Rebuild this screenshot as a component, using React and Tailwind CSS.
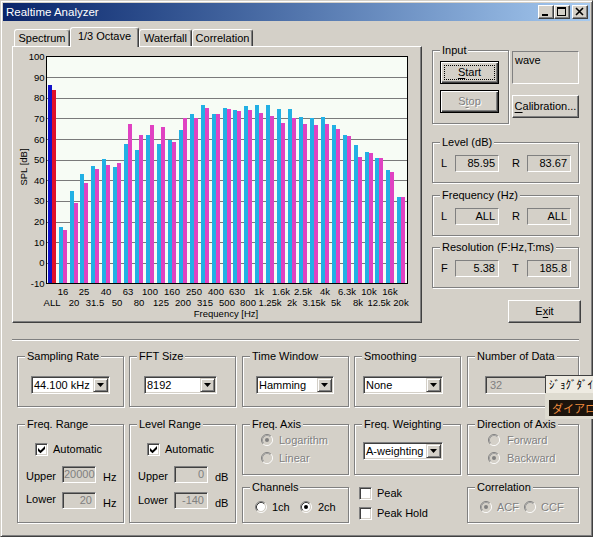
import React from 'react';

const FONT = "font-['Liberation_Sans',Arial,sans-serif]";
const raised = "border border-t-white border-l-white border-r-[#404040] border-b-[#404040] shadow-[inset_-1px_-1px_0_#808080]";
const defBtn = "border border-black shadow-[inset_1px_1px_0_#fff,inset_-1px_-1px_0_#404040,inset_-2px_-2px_0_#808080]";
const sunken2 = "border border-t-[#808080] border-l-[#808080] border-r-white border-b-white shadow-[inset_1px_1px_0_#404040,inset_-1px_-1px_0_#d4d0c8] p-[1px]";
const sunken1 = "border border-t-[#808080] border-l-[#808080] border-r-white border-b-white";
const dis = "text-[#808080] [text-shadow:1px_1px_0_#fff]";

const cyan = [85.95, 17.6, 34.6, 43, 46.8, 50.2, 46.5, 57.5, 54.6, 61.8, 57.6, 59.6, 64.2, 72, 76.5, 72, 75, 74, 75.8, 76.7, 76.7, 74.8, 74.8, 70.9, 70.4, 70.9, 66.6, 62.2, 56.9, 53.9, 51, 44.8, 31.7];
const pink = [83.67, 15.7, 28.8, 38.6, 45.3, 47.4, 48.3, 67.2, 61.9, 66.8, 65.8, 58.5, 70, 70, 75, 72, 74.4, 73.4, 73.9, 72.4, 71.4, 68, 70, 67.5, 66.6, 67.5, 65, 61.7, 51.5, 53, 51, 44.2, 31.7];
const labels = ['ALL', '16', '20', '25', '31.5', '40', '50', '63', '80', '100', '125', '160', '200', '250', '315', '400', '500', '630', '800', '1k', '1.25k', '1.6k', '2k', '2.5k', '3.15k', '4k', '5k', '6.3k', '8k', '10k', '12.5k', '16k', '20k'];

const PX = 227 / 110;
const yv = (v) => 56.5 + (100 - v) * PX;
const xb = (i) => Math.round(47.7 + i * 10.925);

function Chart() {
  const grid = [];
  for (let k = 0; k <= 11; k++) grid.push(k);
  return (
    <svg width="408" height="275" viewBox="13 47 408 275" fontFamily="Liberation Sans, Arial, sans-serif" fontSize="9.5" shapeRendering="crispEdges">
      <rect x="46.5" y="56.5" width="361" height="227" fill="#f7fcf5" />
      {grid.slice(1, 11).map((k) => {
        const y = Math.round(56.5 + k * 20.636) + 0.5;
        return <line key={k} x1="47" x2="407" y1={y} y2={y} stroke="#7a7a7a" strokeWidth="1" />;
      })}
      {cyan.map((v, i) => {
        const x = xb(i);
        const y1 = yv(v);
        const y2 = yv(pink[i]);
        return (
          <g key={i}>
            <rect x={x} y={y1} width="4" height={283 - y1} fill={i === 0 ? '#1414c8' : '#22b0e4'} />
            <rect x={x + 4} y={y2} width="4" height={283 - y2} fill={i === 0 ? '#e0102a' : '#e042c2'} />
          </g>
        );
      })}
      <rect x="46.5" y="56.5" width="361" height="227" fill="none" stroke="#000" strokeWidth="1" />
      {grid.map((k) => {
        const v = 100 - k * 10;
        const y = 56.5 + k * 20.636;
        return (
          <text key={k} x="44.5" y={y + 3.5} textAnchor="end" fill="#000">{v}</text>
        );
      })}
      <text transform="translate(26.5,167) rotate(-90)" textAnchor="middle" fill="#000">SPL [dB]</text>
      {labels.map((t, i) => (
        <text key={t} x={xb(i) + 4} y={i % 2 ? 294.5 : 306} textAnchor="middle" fill="#000">{t}</text>
      ))}
      <text x="226" y="316.5" textAnchor="middle" fill="#000">Frequency [Hz]</text>
    </svg>
  );
}

function Group({ title, className = '', inner = '', children }) {
  return (
    <fieldset className={`border border-[#808080] shadow-[inset_1px_1px_0_#fff,1px_1px_0_#fff] min-w-0 ${className}`}>
      <legend className="ml-[7px] px-[2px] h-[14px] leading-[14px] bg-[#d4d0c8]">{title}</legend>
      <div className={inner}>{children}</div>
    </fieldset>
  );
}

function Btn({ children, className = '', def = false, disabled = false, focus = false }) {
  return (
    <div className={`${def ? defBtn : raised} bg-[#d4d0c8] flex items-center justify-center ${focus ? 'outline-1 outline-dotted outline-black outline-offset-[-5px]' : ''} ${disabled ? dis : ''} ${className}`}>
      <span>{children}</span>
    </div>
  );
}

function Combo({ value, className = '' }) {
  return (
    <div className={`${sunken2} bg-white h-[18px] flex ${className}`}>
      <div className="flex-1 pl-[1px] leading-[14px] whitespace-nowrap overflow-hidden">{value}</div>
      <div className="w-[15px] h-[14px] border border-t-[#d4d0c8] border-l-[#d4d0c8] border-r-[#404040] border-b-[#404040] shadow-[inset_1px_1px_0_#fff,inset_-1px_-1px_0_#808080] bg-[#d4d0c8] flex items-center justify-center">
        <svg width="7" height="4" viewBox="0 0 7 4"><path d="M0 0h7L3.5 4z" fill="#000" /></svg>
      </div>
    </div>
  );
}

function Edit({ value, className = '', left = false }) {
  return (
    <div className={`${sunken2} bg-[#d4d0c8] text-[#808080] leading-[13px] ${left ? 'pl-[4px]' : 'text-right pr-[3px]'} ${className}`}>{value}</div>
  );
}

function Val({ children }) {
  return <div className={`${sunken1} w-[44px] h-[17px] text-right pr-[3px] leading-[15px]`}>{children}</div>;
}

function Check({ checked }) {
  return (
    <div className={`${sunken2} bg-white w-[13px] h-[13px] shrink-0`}>
      {checked && (
        <svg width="9" height="9" viewBox="0 0 9 9" className="block">
          <path d="M1 3L3.5 5.5L8 1V4L3.5 8.3L1 6Z" fill="#000" />
        </svg>
      )}
    </div>
  );
}

function Radio({ checked = false, disabled = false }) {
  return (
    <svg width="12" height="12" viewBox="0 0 12 12" className="shrink-0">
      <circle cx="6" cy="6" r="4.2" fill={disabled ? '#d4d0c8' : '#fff'} />
      <path d="M2.11 9.89A5.5 5.5 0 0 1 9.89 2.11" stroke="#808080" fill="none" />
      <path d="M9.89 2.11A5.5 5.5 0 0 1 2.11 9.89" stroke="#fff" fill="none" />
      <path d="M2.82 9.18A4.5 4.5 0 0 1 9.18 2.82" stroke={disabled ? '#a0a0a0' : '#404040'} fill="none" />
      <path d="M9.18 2.82A4.5 4.5 0 0 1 2.82 9.18" stroke="#d4d0c8" fill="none" />
      {checked && <circle cx="6" cy="6" r="2" fill={disabled ? '#808080' : '#000'} />}
    </svg>
  );
}

function CapBtn({ children, className = '' }) {
  return (
    <div className={`w-[16px] h-[14px] ${raised} bg-[#d4d0c8] flex items-center justify-center ${className}`}>
      {children}
    </div>
  );
}

function Tab({ children, sel = false, className = '' }) {
  return (
    <div
      className={`${className} border-t border-l border-white border-r border-r-[#404040] shadow-[inset_-1px_0_0_#808080] rounded-t-[3px] bg-[#d4d0c8] flex items-center justify-center whitespace-nowrap ${
        sel ? 'h-[20px] -mb-[1px] relative z-10 pb-[3px]' : 'h-[17px]'
      }`}
    >
      {children}
    </div>
  );
}

export default function App() {
  return (
    <div className={`relative w-[593px] h-[537px] overflow-hidden bg-[#d4d0c8] text-black text-[11px] leading-[15px] ${FONT}`}>
      <div className="w-full h-full flex flex-col p-[2px] border border-t-[#d4d0c8] border-l-[#d4d0c8] border-r-[#404040] border-b-[#404040] shadow-[inset_1px_1px_0_#fff,inset_-1px_-1px_0_#808080]">
        {/* Title bar */}
        <div className="h-[18px] shrink-0 bg-linear-to-r from-[#0a246a] to-[#a6caf0] flex items-center pl-[3px] pr-[2px]">
          <span className="flex-1 text-white text-[11.5px] leading-[18px]">Realtime Analyzer</span>
          <CapBtn>
            <svg width="14" height="12" viewBox="0 0 14 12"><rect x="3" y="8" width="6" height="2" fill="#000" /></svg>
          </CapBtn>
          <CapBtn>
            <svg width="14" height="12" viewBox="0 0 14 12"><rect x="2.5" y="1.5" width="8" height="8" fill="none" stroke="#000" /><rect x="2" y="1" width="9" height="2" fill="#000" /></svg>
          </CapBtn>
          <CapBtn className="ml-[2px]">
            <svg width="14" height="12" viewBox="0 0 14 12"><path d="M3 2L10 9M10 2L3 9" stroke="#000" strokeWidth="1.6" /></svg>
          </CapBtn>
        </div>

        {/* Client */}
        <div className="flex-1 flex flex-col">
          <div className="flex pl-[9px]">
            {/* Tab control */}
            <div className="mt-[6px] w-[410px] flex flex-col">
              <div className="flex items-end h-[19px] pl-[2px]">
                <Tab className="w-[56px]">Spectrum</Tab>
                <Tab sel className="w-[69px]">1/3 Octave</Tab>
                <Tab className="w-[53px]">Waterfall</Tab>
                <Tab className="w-[61px]">Correlation</Tab>
              </div>
              <div className="w-[410px] h-[277px] border border-t-white border-l-white border-r-[#404040] border-b-[#404040] shadow-[inset_-1px_-1px_0_#808080]">
                <Chart />
              </div>
            </div>

            {/* Right panel */}
            <div className="ml-[9px] w-[152px] flex flex-col">
              <div className="flex items-start">
                <Group title="Input" className="ml-[1px] mt-[22px] w-[77px] h-[81px]" inner="pl-[7px] pt-[4px] flex flex-col gap-[6px]">
                  <Btn def focus className="w-[59px] h-[23px]"><span className="underline underline-offset-[2px]">S</span>tart</Btn>
                  <Btn def disabled className="w-[59px] h-[23px]">S<span className="underline underline-offset-[2px]">t</span>op</Btn>
                </Group>
                <div className="ml-[3px] mt-[30px] flex flex-col">
                  <div className={`${sunken2} bg-[#d4d0c8] shadow-none w-[67px] h-[33px] pl-[2px] leading-[15px]`}>wave</div>
                  <Btn className="mt-[11px] w-[67px] h-[23px]"><span className="underline underline-offset-[2px]">C</span>alibration...</Btn>
                </div>
              </div>
              <Group title="Level (dB)" className="ml-[1px] mt-[11px] w-[147px] h-[48px]" inner="pl-[8px] pt-[6px] flex items-center">
                <span className="w-[14px]">L</span>
                <Val>85.95</Val>
                <span className="ml-[13px] w-[15px]">R</span>
                <Val>83.67</Val>
              </Group>
              <Group title="Frequency (Hz)" className="ml-[1px] mt-[5px] w-[147px] h-[48px]" inner="pl-[8px] pt-[6px] flex items-center">
                <span className="w-[14px]">L</span>
                <Val>ALL</Val>
                <span className="ml-[13px] w-[15px]">R</span>
                <Val>ALL</Val>
              </Group>
              <Group title="Resolution (F:Hz,T:ms)" className="ml-[1px] mt-[4px] w-[147px] h-[48px]" inner="pl-[8px] pt-[6px] flex items-center">
                <span className="w-[14px]">F</span>
                <Val>5.38</Val>
                <span className="ml-[13px] w-[15px]">T</span>
                <Val>185.8</Val>
              </Group>
              <Btn className="ml-[77px] mt-[12px] w-[73px] h-[23px]">E<span className="underline underline-offset-[2px]">x</span>it</Btn>
            </div>
          </div>

          {/* Groove */}
          <div className="ml-[9px] mt-[16px] w-[567px] h-[2px] border-t border-t-[#808080] border-b border-b-white" />

          {/* Lower settings */}
          <div className="ml-[14px] mt-[8px] flex items-start">
            {/* col 1 */}
            <div className="w-[107px] flex flex-col">
              <Group title="Sampling Rate" className="w-[107px] h-[58px]" inner="pl-[13px] pt-[13px]">
                <Combo value="44.100 kHz" className="w-[79px]" />
              </Group>
              <Group title="Freq. Range" className="mt-[10px] w-[107px] h-[106px]" inner="pt-[12px]">
                <div className="pl-[17px] flex items-center h-[13px]">
                  <Check checked />
                  <span className="ml-[5px]">Automatic</span>
                </div>
                <div className="mt-[10px] pl-[8px] flex items-center h-[17px]">
                  <span className="w-[36px] mt-[3px]">Upper</span>
                  <Edit value="20000" className="w-[34px] h-[17px]" />
                  <span className="ml-[7px] mt-[6px]">Hz</span>
                </div>
                <div className="mt-[9px] pl-[8px] flex items-center h-[17px]">
                  <span className="w-[36px] -mt-[2px]">Lower</span>
                  <Edit value="20" className="w-[34px] h-[17px]" />
                  <span className="ml-[7px] mt-[6px]">Hz</span>
                </div>
              </Group>
            </div>

            {/* col 2 */}
            <div className="ml-[5px] w-[107px] flex flex-col">
              <Group title="FFT Size" className="w-[107px] h-[58px]" inner="pl-[14px] pt-[13px]">
                <Combo value="8192" className="w-[73px]" />
              </Group>
              <Group title="Level Range" className="mt-[10px] w-[107px] h-[106px]" inner="pt-[12px]">
                <div className="pl-[17px] flex items-center h-[13px]">
                  <Check checked />
                  <span className="ml-[5px]">Automatic</span>
                </div>
                <div className="mt-[10px] pl-[8px] flex items-center h-[17px]">
                  <span className="w-[36px] mt-[3px]">Upper</span>
                  <Edit value="0" className="w-[34px] h-[17px]" />
                  <span className="ml-[7px] mt-[6px]">dB</span>
                </div>
                <div className="mt-[9px] pl-[8px] flex items-center h-[17px]">
                  <span className="w-[36px]">Lower</span>
                  <Edit value="-140" className="w-[34px] h-[17px]" />
                  <span className="ml-[7px] mt-[6px]">dB</span>
                </div>
              </Group>
            </div>

            {/* col 3 */}
            <div className="ml-[6px] w-[107px] flex flex-col">
              <Group title="Time Window" className="w-[107px] h-[58px]" inner="pl-[13px] pt-[13px]">
                <Combo value="Hamming" className="w-[78px]" />
              </Group>
              <Group title="Freq. Axis" className="mt-[10px] w-[107px] h-[58px]" inner="pl-[18px] pt-[2px] flex flex-col gap-[4px]">
                <div className="flex items-center h-[14px] gap-[6px]"><Radio checked disabled /><span className={dis}>Logarithm</span></div>
                <div className="flex items-center h-[14px] gap-[6px]"><Radio disabled /><span className={dis}>Linear</span></div>
              </Group>
              <Group title="Channels" className="mt-[5px] w-[107px] h-[43px]" inner="pl-[12px] pt-[6px] flex items-center h-[20px]">
                <Radio />
                <span className="ml-[5px] w-[28px]">1ch</span>
                <Radio checked />
                <span className="ml-[6px]">2ch</span>
              </Group>
            </div>

            {/* col 4 */}
            <div className="ml-[5px] w-[107px] flex flex-col">
              <Group title="Smoothing" className="w-[107px] h-[58px]" inner="pl-[8px] pt-[13px]">
                <Combo value="None" className="w-[80px]" />
              </Group>
              <Group title="Freq. Weighting" className="mt-[10px] w-[107px] h-[58px]" inner="pl-[8px] pt-[11px]">
                <Combo value="A-weighting" className="w-[80px]" />
              </Group>
              <div className="mt-[12px] pl-[5px] flex flex-col gap-[7px]">
                <div className="flex items-center h-[13px]"><Check /><span className="ml-[5px]">Peak</span></div>
                <div className="flex items-center h-[13px]"><Check /><span className="ml-[5px]">Peak Hold</span></div>
              </div>
            </div>

            {/* col 5 */}
            <div className="ml-[6px] w-[112px] flex flex-col">
              <Group title="Number of Data" className="w-[112px] h-[58px]" inner="pl-[17px] pt-[13px]">
                <Edit value="32" left className="w-[75px] h-[18px] leading-[14px]" />
              </Group>
              <Group title="Direction of Axis" className="mt-[10px] w-[112px] h-[58px]" inner="pl-[20px] pt-[2px] flex flex-col gap-[4px]">
                <div className="flex items-center h-[14px] gap-[7px]"><Radio disabled /><span className={dis}>Forward</span></div>
                <div className="flex items-center h-[14px] gap-[7px]"><Radio checked disabled /><span className={dis}>Backward</span></div>
              </Group>
              <Group title="Correlation" className="mt-[5px] w-[112px] h-[43px]" inner="pl-[12px] pt-[6px] flex items-center h-[20px]">
                <Radio checked disabled />
                <span className={`ml-[5px] ${dis}`}>ACF</span>
                <span className="ml-[5px] flex"><Radio disabled /></span>
                <span className={`ml-[5px] ${dis}`}>CCF</span>
              </Group>
            </div>
          </div>
        </div>
      </div>

      {/* Floating tooltip / palette */}
      <div className="absolute left-[545px] top-[375px] w-[60px] h-[44px] flex flex-col font-['Noto_Sans_CJK_JP',sans-serif]">
        <div className="h-[18px] bg-[#eeebe2] border-l border-t border-[#404040] pl-[3px] text-[11px] leading-[17px] whitespace-nowrap overflow-hidden">ｼﾞｮｸﾞﾀﾞｲｱﾙ</div>
        <div className="flex-1 bg-[#dedbd0] pt-[7px] pl-[4px]">
          <div className="h-[16px] bg-[#1c140c] text-[#f08c3c] text-[11px] leading-[16px] pl-[3px] whitespace-nowrap overflow-hidden">ダイアログ</div>
        </div>
      </div>
    </div>
  );
}
